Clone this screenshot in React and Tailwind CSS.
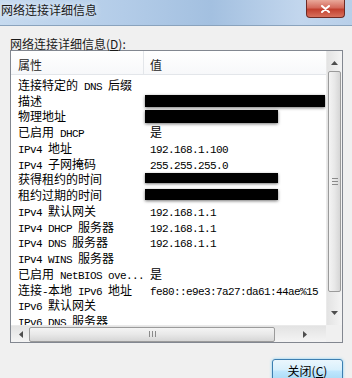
import React from 'react';

const rows = [
  ['连接特定的 DNS 后缀', ''],
  ['描述', { w: 180, h: 12, dy: 2 }],
  ['物理地址', { w: 133, h: 13, dy: 2 }],
  ['已启用 DHCP', '是'],
  ['IPv4 地址', '192.168.1.100'],
  ['IPv4 子网掩码', '255.255.255.0'],
  ['获得租约的时间', { w: 133, h: 10, dy: 1 }],
  ['租约过期的时间', { w: 133, h: 11, dy: 1 }],
  ['IPv4 默认网关', '192.168.1.1'],
  ['IPv4 DHCP 服务器', '192.168.1.1'],
  ['IPv4 DNS 服务器', '192.168.1.1'],
  ['IPv4 WINS 服务器', ''],
  ['已启用 NetBIOS ove...', '是'],
  ['连接-本地 IPv6 地址', 'fe80::e9e3:7a27:da61:44ae%15'],
  ['IPv6 默认网关', ''],
  ['IPv6 DNS 服务器', ''],
];

// SimSun-ish look: CJK at 12px, latin half width (6px) mono
function Txt({ s }) {
  return s.split(/([\u3400-\u9fff]+)/).filter(Boolean).map((p, i) =>
    /[\u3400-\u9fff]/.test(p) ? (
      <span key={i} className="text-[12px] leading-[15px] font-['Noto_Sans_CJK_SC',sans-serif]">{p}</span>
    ) : (
      <span key={i} className="text-[11px] leading-[15px] tracking-[-0.6px] whitespace-pre font-['Liberation_Mono','DejaVu_Sans_Mono',monospace]">{p}</span>
    )
  );
}

function Arrow({ dir }) {
  const pts = {
    up: '0,4 3.5,0 7,4',
    down: '0,0 3.5,4 7,0',
    left: '4,0 0,3.5 4,7',
    right: '0,0 4,3.5 0,7',
  }[dir];
  const vert = dir === 'up' || dir === 'down';
  return (
    <svg width={vert ? 7 : 4} height={vert ? 4 : 7} viewBox={vert ? '0 0 7 4' : '0 0 4 7'}>
      <polygon points={pts} fill="#4d4d4d" />
    </svg>
  );
}

export default function App() {
  return (
    <div className="w-[352px] h-[378px] overflow-hidden bg-[#f0f0f0] font-['Noto_Sans_CJK_SC',sans-serif] text-black">
      <div className="h-[26px] flex items-start justify-between border-b border-[#8aa3bd] bg-[linear-gradient(90deg,#c6daef_0%,#b3cce8_35%,#a3c0e0_60%,#c2d6ed_85%,#b8cfe9_100%)]">
        <span className="pl-[1px] pt-[2px] text-[12px] leading-[16px] text-[#1a1a1a] [text-shadow:0_0_6px_#ffffff]">
          网络连接详细信息
        </span>
        <div className="mr-[7px] w-[39px] h-[18px] rounded-b-[4px] border border-t-0 border-[#6e2a24] bg-[linear-gradient(180deg,#e9a89a_0%,#d46a5c_45%,#c2402f_55%,#d8705c_100%)] flex items-center justify-center">
          <svg width="9" height="8" viewBox="0 0 9 8">
            <path d="M1 1 L8 7 M8 1 L1 7" stroke="#ffffff" strokeWidth="2" strokeLinecap="round" />
          </svg>
        </div>
      </div>

      <div className="pl-[10px] pt-[11px]">
        <div className="text-[12px] leading-[14px] text-[#1a1a1a]">网络连接详细信息(<span className="underline">D</span>):</div>

        <div className="mt-[-1px] w-[333px] h-[293px] border border-[#828790] bg-white grid grid-cols-[315px_16px] grid-rows-[274px_17px]">
          <div className="overflow-hidden">
            <div className="h-[24px] flex border-b border-[#e3e6ea] bg-[linear-gradient(180deg,#ffffff_0%,#f7f8fa_100%)] text-[12px] text-[#1e1e1e]">
              <div className="w-[133px] pl-[7px] pt-[5px] flex items-center border-r border-[#e3e6ea]">属性</div>
              <div className="flex-1 pl-[6px] pt-[5px] flex items-center">值</div>
            </div>
            {rows.map(([k, v], i) => (
              <div key={i} className="h-[15.75px] flex items-center">
                <div className="w-[133px] pl-[7px] whitespace-nowrap">
                  <Txt s={k} />
                </div>
                <div className="flex-1 whitespace-nowrap">
                  {typeof v === 'string' ? (
                    <span className="pl-[6px]"><Txt s={v} /></span>
                  ) : (
                    <div
                      className="ml-[1px] bg-black shadow-[0_1px_3px_rgba(0,0,0,0.55)] relative"
                      style={{ width: v.w, height: v.h, top: v.dy }}
                    />
                  )}
                </div>
              </div>
            ))}
          </div>

          <div className="flex flex-col bg-[linear-gradient(90deg,#e3e3e3_0%,#f4f4f4_100%)] border-l border-[#eaeaea]">
            <div className="h-[20px] flex items-center justify-center pt-[4px]">
              <Arrow dir="up" />
            </div>
            <div className="mx-[1px] h-[221px] rounded-[2px] border border-[#9b9b9b] bg-[linear-gradient(90deg,#f4f4f4_0%,#e8e8e8_50%,#d6d6d6_100%)] flex flex-col items-center justify-center gap-[2px]">
              <div className="w-[6px] h-px bg-[#8a8a8a]" />
              <div className="w-[6px] h-px bg-[#8a8a8a]" />
              <div className="w-[6px] h-px bg-[#8a8a8a]" />
            </div>
            <div className="flex-1 flex items-center justify-center pt-[8px]">
              <Arrow dir="down" />
            </div>
          </div>

          <div className="flex items-center bg-[linear-gradient(180deg,#e3e3e3_0%,#f4f4f4_100%)] border-t border-[#eaeaea]">
            <div className="w-[18px] flex items-center justify-center pl-[2px]">
              <Arrow dir="left" />
            </div>
            <div className="w-[246px] h-[15px] rounded-[2px] border border-[#9b9b9b] bg-[linear-gradient(180deg,#f4f4f4_0%,#e8e8e8_50%,#d6d6d6_100%)] flex items-center justify-center gap-[2px]">
              <div className="w-px h-[6px] bg-[#8a8a8a]" />
              <div className="w-px h-[6px] bg-[#8a8a8a]" />
              <div className="w-px h-[6px] bg-[#8a8a8a]" />
            </div>
            <div className="flex-1 flex items-center justify-center pl-[8px]">
              <Arrow dir="right" />
            </div>
          </div>

          <div className="bg-[#f0f0f0]" />
        </div>

        <div className="flex justify-end pr-[9px] pt-[16px]">
          <div className="w-[71px] h-[23px] rounded-[3px] border border-[#3c7fb1] shadow-[0_0_3px_#7fd0f5] bg-[linear-gradient(180deg,#eaf6fd_0%,#d9f0fc_45%,#bee6fd_55%,#a7d9f5_100%)] flex items-center justify-center text-[12px] text-black">
            关闭(<span className="underline">C</span>)
          </div>
        </div>
      </div>
    </div>
  );
}
